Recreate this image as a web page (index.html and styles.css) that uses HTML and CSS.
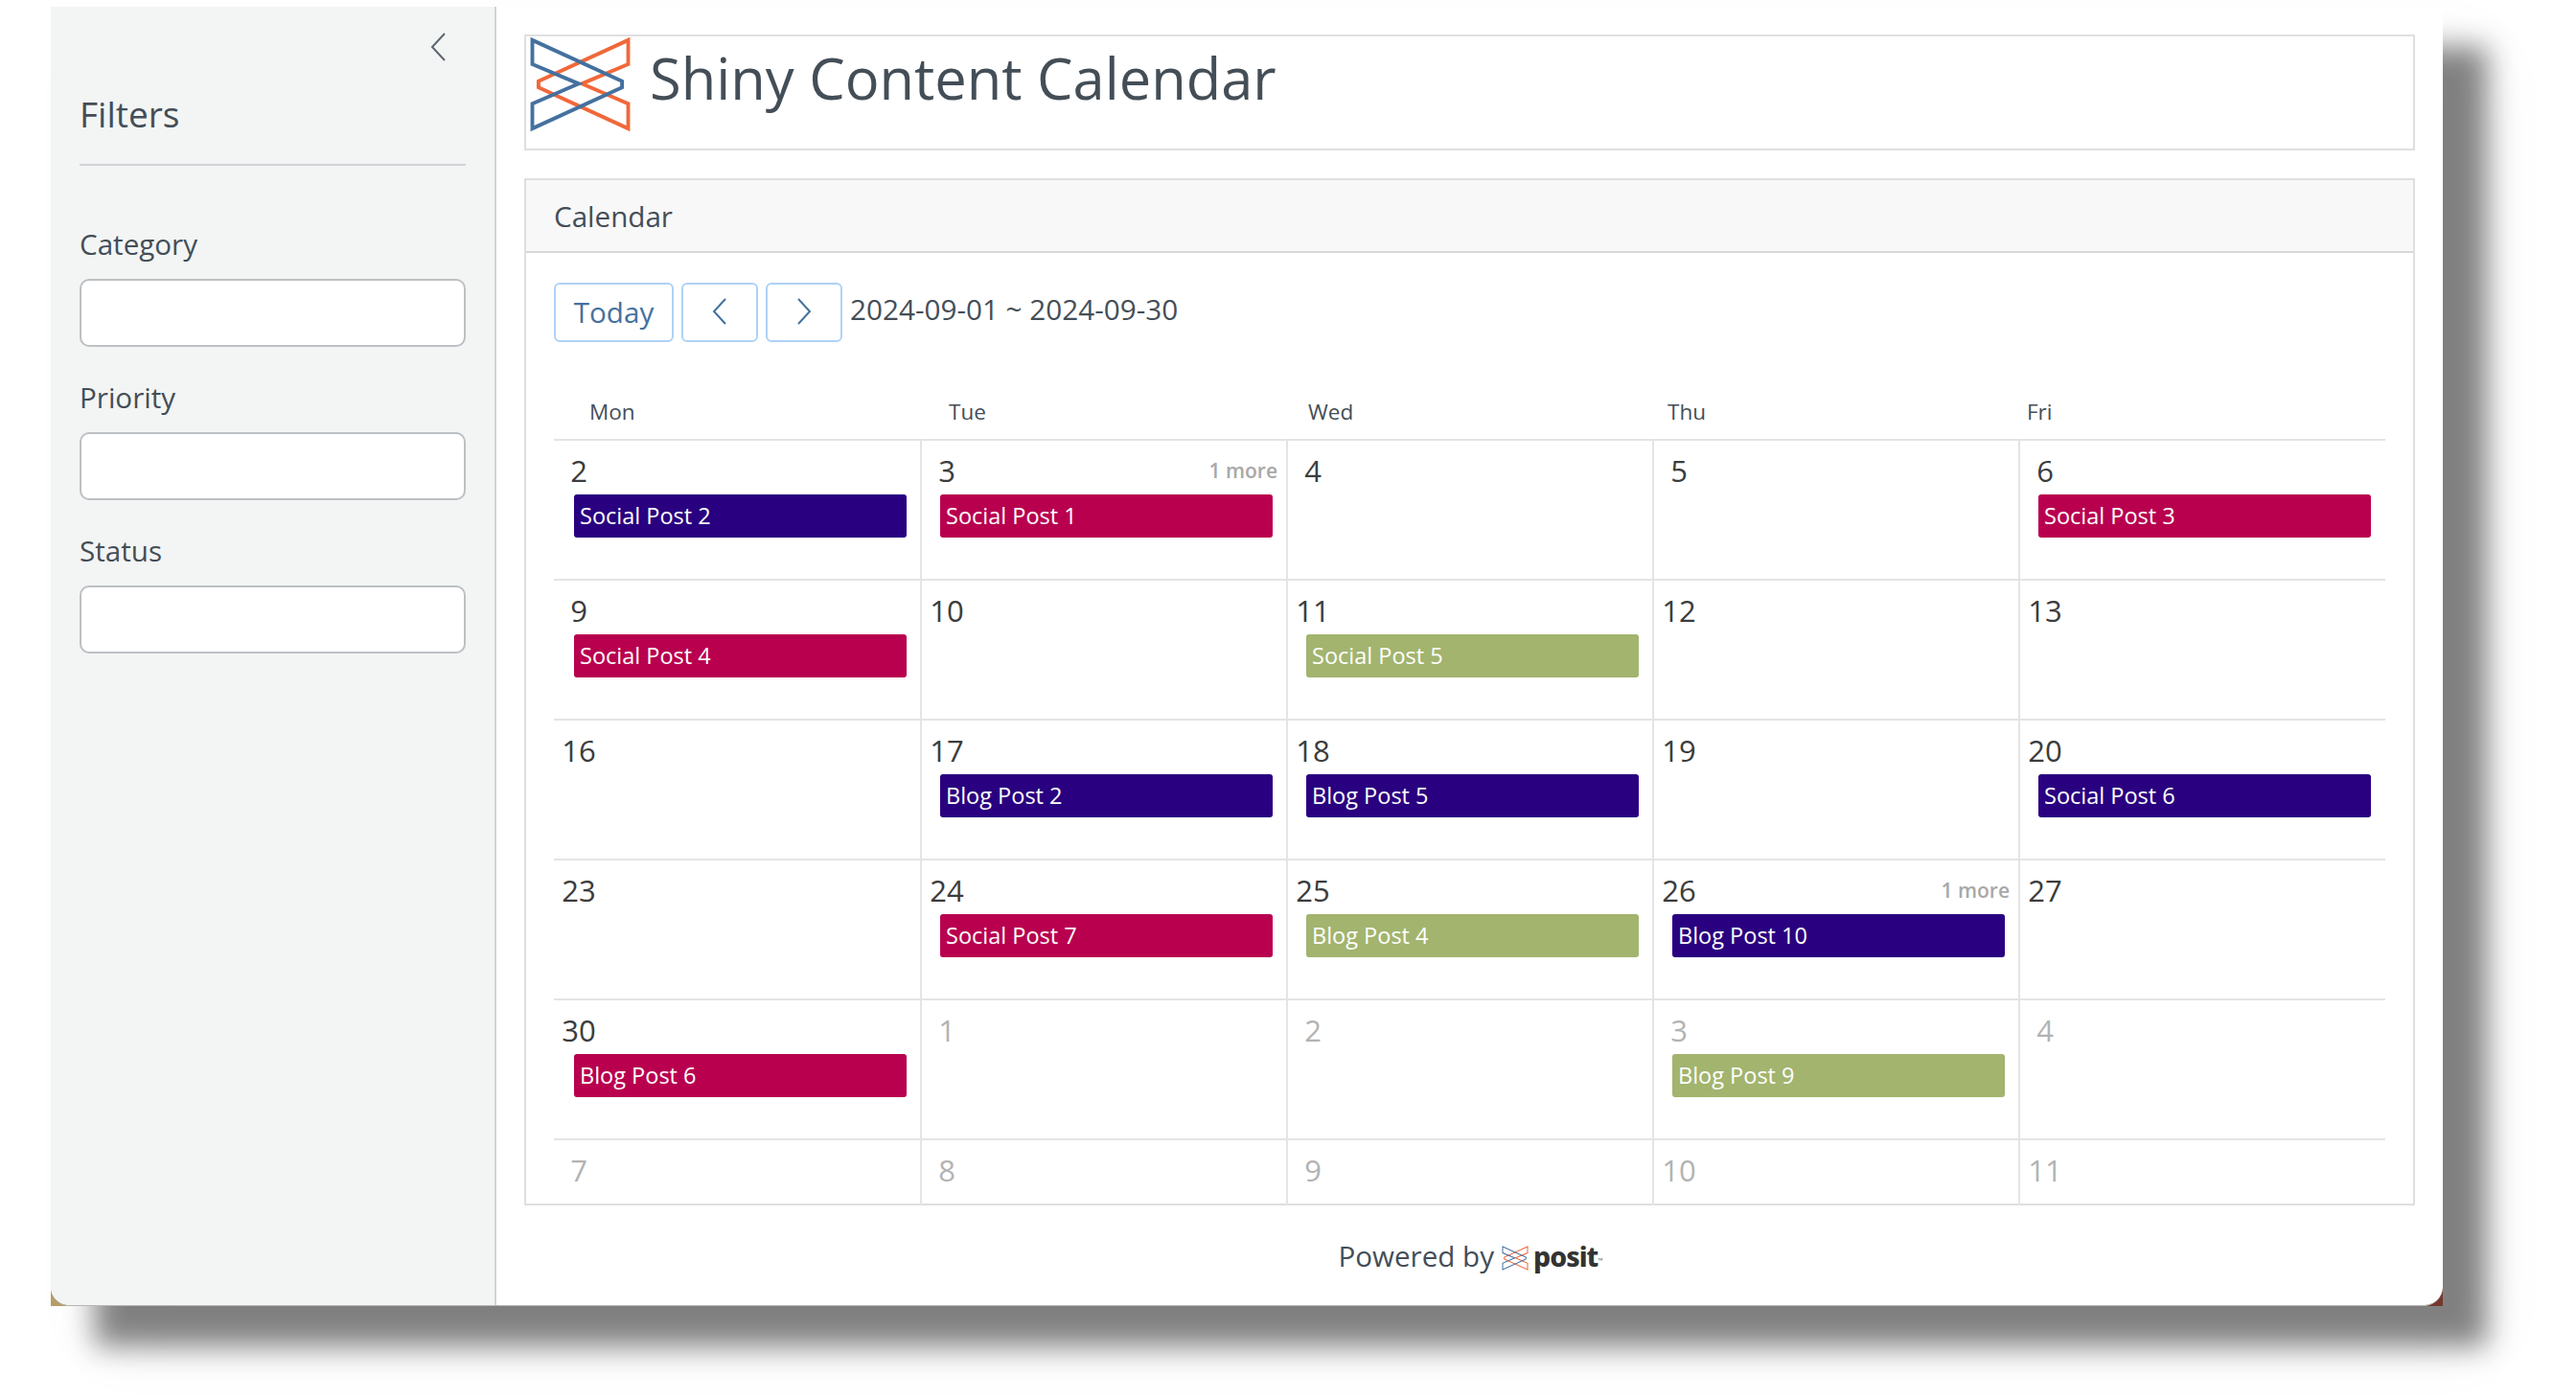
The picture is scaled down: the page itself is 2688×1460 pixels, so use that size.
FILE: index.html
```html
<!DOCTYPE html>
<html lang="en">
<head>
  <meta charset="UTF-8" />
  <title>Shiny Content Calendar</title>
  <link rel="stylesheet" href="styles.css">
</head>
<body>
  <svg class="defs" width="0" height="0">
    <symbol id="mark" viewBox="60 50 330 310">
      <polygon class="mark-orange" points="380,62 90,195 90,215 380,348 380,268 230,203 380,140" />
      <polygon class="mark-blue" points="70,62 360,195 360,215 70,348 70,268 220,203 70,140" />
    </symbol>
  </svg>

  <div class="window">
    <span class="corner corner-left"></span>
    <span class="corner corner-right"></span>
    <div class="app">
      <aside class="sidebar">
        <div class="collapse">
          <svg width="18" height="32" viewBox="0 0 18 32"><path d="M15 2 2 16l13 14" /></svg>
        </div>
        <h2 class="sidebar-title">Filters</h2>
        <div class="field">
          <label>Category</label>
          <input type="text" />
        </div>
        <div class="field">
          <label>Priority</label>
          <input type="text" />
        </div>
        <div class="field">
          <label>Status</label>
          <input type="text" />
        </div>
      </aside>

      <main class="main">
        <header class="title-box">
          <svg class="logo"><use href="#mark" /></svg>
          <h1>Shiny Content Calendar</h1>
        </header>

        <section class="card">
          <div class="card-header">Calendar</div>
          <div class="card-body">
            <div class="toolbar">
              <button class="btn btn-today">Today</button>
              <button class="btn btn-arrow"><svg width="18" height="30" viewBox="0 0 18 30"><path d="M15 2 3 15l12 13" /></svg></button>
              <button class="btn btn-arrow"><svg width="18" height="30" viewBox="0 0 18 30"><path d="M3 2l12 13L3 28" /></svg></button>
              <span class="range">2024-09-01 ~ 2024-09-30</span>
            </div>

            <div class="weekdays">
              <div>Mon</div><div>Tue</div><div>Wed</div><div>Thu</div><div>Fri</div>
            </div>

            <div class="month">
              <div class="day"><span class="num">2</span><div class="event navy">Social Post 2</div></div>
              <div class="day"><span class="num">3</span><span class="more">1 more</span><div class="event crimson">Social Post 1</div></div>
              <div class="day"><span class="num">4</span></div>
              <div class="day"><span class="num">5</span></div>
              <div class="day"><span class="num">6</span><div class="event crimson">Social Post 3</div></div>

              <div class="day"><span class="num">9</span><div class="event crimson">Social Post 4</div></div>
              <div class="day"><span class="num">10</span></div>
              <div class="day"><span class="num">11</span><div class="event green">Social Post 5</div></div>
              <div class="day"><span class="num">12</span></div>
              <div class="day"><span class="num">13</span></div>

              <div class="day"><span class="num">16</span></div>
              <div class="day"><span class="num">17</span><div class="event navy">Blog Post 2</div></div>
              <div class="day"><span class="num">18</span><div class="event navy">Blog Post 5</div></div>
              <div class="day"><span class="num">19</span></div>
              <div class="day"><span class="num">20</span><div class="event navy">Social Post 6</div></div>

              <div class="day"><span class="num">23</span></div>
              <div class="day"><span class="num">24</span><div class="event crimson">Social Post 7</div></div>
              <div class="day"><span class="num">25</span><div class="event green">Blog Post 4</div></div>
              <div class="day"><span class="num">26</span><span class="more">1 more</span><div class="event navy">Blog Post 10</div></div>
              <div class="day"><span class="num">27</span></div>

              <div class="day"><span class="num">30</span><div class="event crimson">Blog Post 6</div></div>
              <div class="day other"><span class="num">1</span></div>
              <div class="day other"><span class="num">2</span></div>
              <div class="day other"><span class="num">3</span><div class="event green">Blog Post 9</div></div>
              <div class="day other"><span class="num">4</span></div>

              <div class="day other last"><span class="num">7</span></div>
              <div class="day other last"><span class="num">8</span></div>
              <div class="day other last"><span class="num">9</span></div>
              <div class="day other last"><span class="num">10</span></div>
              <div class="day other last"><span class="num">11</span></div>
            </div>
          </div>
        </section>

        <footer class="powered">
          Powered by
          <svg class="logo-small"><use href="#mark" /></svg>
          <span class="posit">posit</span><span class="tm">™</span>
        </footer>
      </main>
    </div>
  </div>
</body>
</html>
```

FILE: styles.css
```css
:root {
  --text: #444e57;
  --line: #dfdfdf;
  --blue: #44719f;
  --orange: #f0683a;
}

* {
  box-sizing: border-box;
}

html {
  height: 100%;
}

body {
  min-height: 100%;
  margin: 0;
  padding: 7px 0 0 53px;
  background: #fff;
  color: var(--text);
  font-family: "Open Sans", sans-serif;
  font-size: 29.6px;
}

.defs {
  position: absolute;
}

.mark-blue,
.mark-orange {
  fill: none;
  stroke-width: 12;
}

.mark-blue {
  stroke: var(--blue);
}

.mark-orange {
  stroke: var(--orange);
}

.window {
  position: relative;
  width: 2496px;
  height: 1356px;
  box-shadow: 46px 42px 28px rgba(0, 0, 0, 0.48), 46px 42px 70px rgba(0, 0, 0, 0.05);
}

.corner {
  position: absolute;
  bottom: 0;
  width: 18px;
  height: 18px;
}

.corner-left {
  left: 0;
  background: #b59d66;
}

.corner-right {
  right: 0;
  background: #74392c;
}

.app {
  position: relative;
  display: flex;
  height: 100%;
  background: #fff;
  border-radius: 0 0 20px 20px;
  border-bottom: 1px solid #b5b5b5;
  overflow: hidden;
}

/* sidebar */
.sidebar {
  width: 465px;
  flex: none;
  padding: 0 30px;
  background: #f3f5f4;
  border-right: 2px solid #ced3d7;
}

.collapse {
  display: flex;
  justify-content: flex-end;
  height: 87px;
  padding: 26px 0 0;
  margin-right: 19px;
}

.collapse path,
.btn path {
  fill: none;
  stroke: #5d6770;
  stroke-width: 2;
}

.sidebar-title {
  margin: 0 0 60px;
  padding-bottom: 27px;
  border-bottom: 2px solid #ced3d7;
  font-size: 37px;
  font-weight: 400;
  line-height: 50px;
}

.field {
  margin-bottom: 31px;
}

.field label {
  display: block;
  height: 58px;
  line-height: 44px;
}

.field input {
  display: block;
  width: 100%;
  height: 71px;
  border: 2px solid #bcc0c4;
  border-radius: 10px;
  background: #fff;
}

/* main */
.main {
  flex: 1;
  min-width: 0;
  padding: 29px 29px 0;
}

.title-box {
  display: flex;
  height: 121px;
  border: 2px solid var(--line);
}

.logo {
  width: 109px;
  height: 100px;
  margin-left: 2px;
  flex: none;
}

.title-box h1 {
  margin: 0 0 0 18px;
  font-size: 59.6px;
  font-weight: 400;
  line-height: 85px;
}

.card {
  height: 1072px;
  margin-top: 29px;
  border: 2px solid var(--line);
}

.card-header {
  height: 76px;
  padding-left: 29px;
  background: #f8f8f8;
  border-bottom: 2px solid #d8d8d8;
  line-height: 76px;
}

.card-body {
  padding: 31px 29px 0;
}

.toolbar {
  display: flex;
  align-items: center;
  gap: 8px;
  height: 62px;
}

.btn {
  display: flex;
  align-items: center;
  justify-content: center;
  height: 62px;
  padding: 0;
  background: #fff;
  border: 2px solid #aed2f6;
  border-radius: 6px;
  color: var(--blue);
  font: inherit;
}

.btn-today {
  width: 125px;
  padding-bottom: 2px;
}

.btn-arrow {
  width: 80px;
  padding-bottom: 2px;
}

.btn path {
  stroke: var(--blue);
}

.range {
  margin-bottom: 8px;
  font-size: 29.7px;
}

.weekdays {
  display: grid;
  grid-template-columns: repeat(5, 375px);
  height: 103px;
  padding-top: 55px;
  font-size: 22.5px;
  line-height: 36px;
  border-bottom: 2px solid #e4e4e4;
}

.weekdays div {
  padding-left: 37px;
}

.month {
  display: grid;
  grid-template-columns: 384px 382px 382px 382px 1fr;
  grid-template-rows: repeat(5, 146px) 68px;
}

.day {
  position: relative;
  padding-top: 10px;
  border-bottom: 2px solid #e4e4e4;
  border-right: 2px solid #e4e4e4;
}

.day:nth-child(5n) {
  border-right: 0;
}

.day.last {
  border-bottom: 0;
}

.num {
  display: block;
  width: 52px;
  text-align: center;
  font-size: 31px;
  line-height: 42px;
  color: #3c3c3c;
}

.other .num {
  color: #b3b3b3;
}

.more {
  position: absolute;
  top: 16px;
  right: 9px;
  font-size: 21px;
  font-weight: 600;
  line-height: 30px;
  color: #a8a8a8;
}

.event {
  width: 347px;
  height: 45px;
  margin: 4px 0 0 19px;
  padding-left: 6px;
  border-radius: 3px;
  color: #fff;
  font-size: 23.5px;
  font-weight: 500;
  line-height: 45px;
}

.day:nth-child(5n+1) .event {
  margin-left: 21px;
}

.navy {
  background: #29007f;
}

.crimson {
  background: #b8004f;
}

.green {
  background: #a2b46e;
}

/* footer */
.powered {
  display: flex;
  align-items: center;
  justify-content: center;
  margin-top: 26px;
  padding-left: 2px;
  line-height: 44px;
}

.logo-small {
  width: 28px;
  height: 26px;
  margin: 4px 5px 0 8px;
}

.posit {
  color: #333;
  font-family: "Noto Sans", sans-serif;
  font-size: 28.5px;
  font-weight: 800;
  letter-spacing: -1px;
}

.tm {
  align-self: flex-start;
  margin-top: 10px;
  color: #666;
  font-size: 7px;
}
```
